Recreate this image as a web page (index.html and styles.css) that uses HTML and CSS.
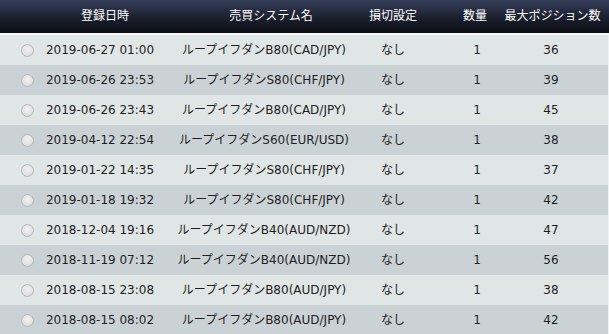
FILE: index.html
```html
<!DOCTYPE html>
<html lang="ja">
<head>
<meta charset="utf-8">
<link rel="stylesheet" href="styles.css">
</head>
<body>
<div class="table">
  <div class="head">
    <div class="h">登録日時</div>
    <div class="h">売買システム名</div>
    <div class="h">損切設定</div>
    <div class="h">数量</div>
    <div class="h">最大ポジション数</div>
  </div>
  <div class="row odd"><div class="radio-cell"><span class="radio"></span></div><div class="c">2019-06-27 01:00</div><div class="c">ループイフダンB80(CAD/JPY)</div><div class="c">なし</div><div class="c">1</div><div class="c">36</div></div>
  <div class="row even"><div class="radio-cell"><span class="radio"></span></div><div class="c">2019-06-26 23:53</div><div class="c">ループイフダンS80(CHF/JPY)</div><div class="c">なし</div><div class="c">1</div><div class="c">39</div></div>
  <div class="row odd"><div class="radio-cell"><span class="radio"></span></div><div class="c">2019-06-26 23:43</div><div class="c">ループイフダンB80(CAD/JPY)</div><div class="c">なし</div><div class="c">1</div><div class="c">45</div></div>
  <div class="row even"><div class="radio-cell"><span class="radio"></span></div><div class="c">2019-04-12 22:54</div><div class="c">ループイフダンS60(EUR/USD)</div><div class="c">なし</div><div class="c">1</div><div class="c">38</div></div>
  <div class="row odd"><div class="radio-cell"><span class="radio"></span></div><div class="c">2019-01-22 14:35</div><div class="c">ループイフダンS80(CHF/JPY)</div><div class="c">なし</div><div class="c">1</div><div class="c">37</div></div>
  <div class="row even"><div class="radio-cell"><span class="radio"></span></div><div class="c">2019-01-18 19:32</div><div class="c">ループイフダンS80(CHF/JPY)</div><div class="c">なし</div><div class="c">1</div><div class="c">42</div></div>
  <div class="row odd"><div class="radio-cell"><span class="radio"></span></div><div class="c">2018-12-04 19:16</div><div class="c">ループイフダンB40(AUD/NZD)</div><div class="c">なし</div><div class="c">1</div><div class="c">47</div></div>
  <div class="row even"><div class="radio-cell"><span class="radio"></span></div><div class="c">2018-11-19 07:12</div><div class="c">ループイフダンB40(AUD/NZD)</div><div class="c">なし</div><div class="c">1</div><div class="c">56</div></div>
  <div class="row odd"><div class="radio-cell"><span class="radio"></span></div><div class="c">2018-08-15 23:08</div><div class="c">ループイフダンB80(AUD/JPY)</div><div class="c">なし</div><div class="c">1</div><div class="c">38</div></div>
  <div class="row even"><div class="radio-cell"><span class="radio"></span></div><div class="c">2018-08-15 08:02</div><div class="c">ループイフダンB80(AUD/JPY)</div><div class="c">なし</div><div class="c">1</div><div class="c">42</div></div>
</div>
</body>
</html>
```

FILE: styles.css
```css
html, body {
  margin: 0;
  padding: 0;
  background: #cbd2d6;
}
body {
  font-family: "DejaVu Sans", "Noto Sans CJK JP", sans-serif;
  font-size: 12px;
  color: #1e1e1e;
  width: 609px;
  height: 334px;
  overflow: hidden;
}
.table {
  display: flex;
  flex-direction: column;
}
.head {
  height: 33px;
  display: grid;
  grid-template-columns: 210px 122px 122px 42px 1fr;
  align-items: center;
  background: linear-gradient(to bottom, #363f5b 0%, #1d2232 50%, #0b0d13 100%);
  border-bottom: 2px solid #f6f8f8;
  color: #ffffff;
}
.h {
  text-align: center;
  line-height: 33px;
  white-space: nowrap;
}
.row {
  height: 30px;
  display: grid;
  grid-template-columns: 40px 120px 208px 50px 118px 30px 1fr;
  align-items: center;
  border-right: 1px solid #eef1f1;
  box-sizing: border-box;
}
.row.odd { background: #e0e5e5; }
.row.even { background: #cbd2d6; }
.c {
  text-align: center;
  white-space: nowrap;
  line-height: 30px;
}
.radio-cell {
  display: flex;
  align-items: center;
  padding-left: 21px;
}
.radio {
  width: 11px;
  height: 11px;
  border-radius: 50%;
  border: 1px solid #b4b8ba;
  background: radial-gradient(circle at 50% 40%, #f2f2f2 0%, #e2e2e2 60%, #d2d4d5 100%);
}
```
